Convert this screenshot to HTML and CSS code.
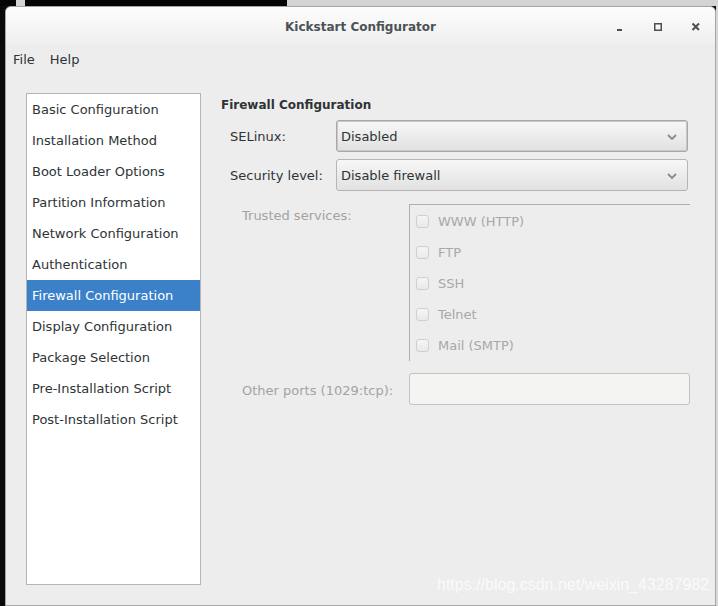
FILE: index.html
```html
<!DOCTYPE html>
<html>
<head>
<meta charset="utf-8">
<link rel="stylesheet" href="styles.css">
</head>
<body>
<div class="desktop">
  <div class="topstrip">
    <div class="seg black s1"></div>
    <div class="seg gray s2"></div>
    <div class="seg black s3"></div>
    <div class="seg gray s4"></div>
  </div>
  <div class="deskrow">
    <div class="leftedge"></div>
    <div class="window">
      <div class="titlebar">
        <div class="title">Kickstart Configurator</div>
        <div class="controls">
          <svg class="ctl" width="12" height="12" viewBox="0 0 12 12"><rect x="3" y="8" width="5" height="2" fill="#4a4f52"/></svg>
          <svg class="ctl" width="12" height="12" viewBox="0 0 12 12"><rect x="2.75" y="2.75" width="6.5" height="6.5" fill="none" stroke="#4a4f52" stroke-width="1.5"/></svg>
          <svg class="ctl" width="12" height="12" viewBox="0 0 12 12"><path d="M2.5 2.5 L9 9 M9 2.5 L2.5 9" stroke="#4a4f52" stroke-width="2"/></svg>
        </div>
      </div>
      <div class="menubar">
        <span class="menu">File</span>
        <span class="menu">Help</span>
      </div>
      <div class="content">
        <div class="sidelist">
          <div class="item">Basic Configuration</div>
          <div class="item">Installation Method</div>
          <div class="item">Boot Loader Options</div>
          <div class="item">Partition Information</div>
          <div class="item">Network Configuration</div>
          <div class="item">Authentication</div>
          <div class="item selected">Firewall Configuration</div>
          <div class="item">Display Configuration</div>
          <div class="item">Package Selection</div>
          <div class="item">Pre-Installation Script</div>
          <div class="item">Post-Installation Script</div>
        </div>
        <div class="pane">
          <div class="heading">Firewall Configuration</div>
          <div class="topform">
            <div class="label">SELinux:</div>
            <div class="combo focused"><span>Disabled</span><svg width="12" height="8" viewBox="0 0 12 8"><path d="M2 2 L6 6 L10 2" fill="none" stroke="#8a8a8a" stroke-width="1.8"/></svg></div>
            <div class="label">Security level:</div>
            <div class="combo"><span>Disable firewall</span><svg width="12" height="8" viewBox="0 0 12 8"><path d="M2 2 L6 6 L10 2" fill="none" stroke="#8a8a8a" stroke-width="1.8"/></svg></div>
          </div>
          <div class="bottomform">
            <div class="label dim tl">Trusted services:</div>
            <div class="frame">
              <div class="check"><span class="box"></span>WWW (HTTP)</div>
              <div class="check"><span class="box"></span>FTP</div>
              <div class="check"><span class="box"></span>SSH</div>
              <div class="check"><span class="box"></span>Telnet</div>
              <div class="check"><span class="box"></span>Mail (SMTP)</div>
            </div>
            <div class="label dim mid">Other ports (1029:tcp):</div>
            <div class="entry"></div>
          </div>
        </div>
      </div>
      <div class="watermark">https://blog.csdn.net/weixin_43287982</div>
    </div>
    <div class="rightedge"></div>
  </div>
</div>
</body>
</html>
```
FILE: styles.css
```css
* { box-sizing: border-box; }
html, body { margin: 0; padding: 0; }
body {
  width: 718px;
  height: 606px;
  overflow: hidden;
  background: #111;
  font-family: "DejaVu Sans", sans-serif;
  font-size: 13px;
  color: #2e3436;
}
.desktop { display: flex; flex-direction: column; width: 718px; height: 606px; }
.topstrip { display: flex; height: 6px; flex: none; }
.seg.black { background: #050505; }
.seg.gray { background: #d4d4d4; }
.s1 { width: 16px; }
.s2 { width: 9px; background: #cfcfcf; }
.s3 { width: 262px; }
.s4 { flex: 1; background: #dcdcdc; }
.deskrow { display: flex; flex: 1; }
.leftedge { width: 5px; background: #0a0a0a; flex: none; }
.rightedge { flex: 1; background: #d8d8d8; }
.window {
  position: relative;
  width: 711px;
  height: 600px;
  background: #ededed;
  border: 1px solid #a6a6a6;
  border-radius: 6px 6px 0 0;
  display: flex;
  flex-direction: column;
}
.titlebar {
  height: 37px;
  flex: none;
  background: linear-gradient(#fdfdfd, #efefef);
  border-radius: 5px 5px 0 0;
  display: flex;
  align-items: center;
  justify-content: center;
  position: relative;
}
.title {
  font-weight: bold;
  color: #4b5257;
  font-size: 12px;
  margin-left: 0;
  margin-top: 2px;
}
.controls {
  position: absolute;
  right: 13px;
  top: 14px;
  display: flex;
  gap: 26px;
}
.ctl { display: block; }
.menubar {
  height: 31px;
  flex: none;
  display: flex;
  align-items: center;
  padding-left: 7px;
  gap: 15px;
  padding-bottom: 1px;
}
.menu { color: #2e3436; }
.content {
  flex: 1;
  display: flex;
  padding: 18px 0 20px 20px;
}
.sidelist {
  width: 175px;
  background: #fff;
  border: 1px solid #b4b4b4;
  flex: none;
}
.item {
  height: 31px;
  line-height: 31px;
  padding-left: 5px;
  color: #2e3436;
  white-space: nowrap;
}
.item.selected { background: #3b81c9; color: #fff; }
.pane {
  flex: 1;
  padding-left: 20px;
  padding-top: 3px;
}
.heading {
  font-weight: bold;
  font-size: 12px;
  height: 18px;
  line-height: 18px;
  margin-bottom: 6px;
}
.topform {
  display: grid;
  grid-template-columns: 106px 352px;
  grid-auto-rows: 32px;
  row-gap: 7px;
  padding-left: 9px;
  align-items: center;
}
.label { white-space: nowrap; }
.topform .label { padding-top: 1px; }
.dim { color: #a3a3a3; }
.combo {
  height: 32px;
  border: 1px solid #b5b5b5;
  border-radius: 3px;
  background: linear-gradient(#f7f7f7, #e1e1e1);
  display: flex;
  align-items: center;
  justify-content: space-between;
  padding: 1px 9px 0 4px;
  color: #2e3436;
}
.combo.focused { box-shadow: inset 0 0 0 1px #c8c8c8; border-color: #a8a8a8; }
.combo svg { display: block; }
.bottomform {
  display: grid;
  grid-template-columns: 167px 281px;
  padding-left: 21px;
  margin-top: 13px;
  row-gap: 12px;
}
.tl { padding-top: 4px; }
.mid { align-self: center; padding-top: 2px; }
.frame {
  border-top: 1px solid #b0b0b0;
  border-left: 1px solid #b0b0b0;
  padding-top: 1px;
  height: 157px;
}
.check {
  height: 31px;
  display: flex;
  align-items: center;
  color: #a8a8a8;
  padding-left: 6px;
}
.box {
  width: 13px;
  height: 13px;
  border: 1px solid #cfcfcf;
  border-radius: 3px;
  background: linear-gradient(#f5f5f5, #e9e9e9);
  margin-right: 9px;
  flex: none;
}
.entry {
  height: 32px;
  border: 1px solid #c2c2c2;
  border-radius: 3px;
  background: #f4f4f3;
}
.watermark {
  position: absolute;
  left: 431px;
  top: 569px;
  font-family: "Liberation Sans", Arial, sans-serif;
  font-size: 16px;
  color: rgba(255,255,255,0.75);
  white-space: nowrap;
}
```
